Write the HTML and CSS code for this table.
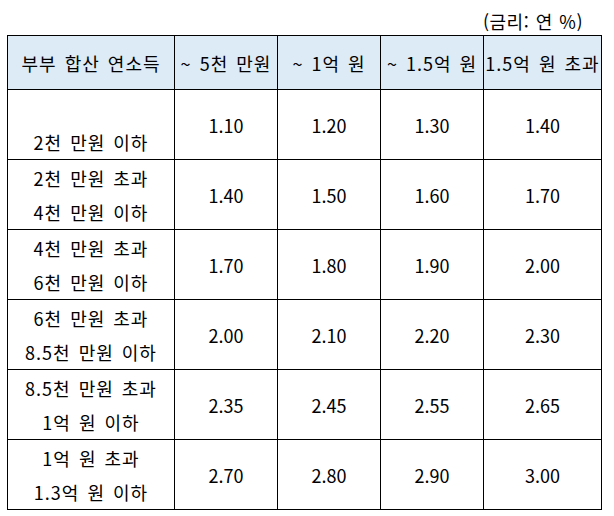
FILE: index.html
```html
<!DOCTYPE html>
<html lang="ko">
<head>
<meta charset="utf-8">
<link rel="stylesheet" href="styles.css">
</head>
<body>
<div class="page">
  <div class="unit">(금리: 연 %)</div>
  <table class="rates">
    <colgroup>
      <col class="c-income">
      <col class="c-mid">
      <col class="c-mid">
      <col class="c-mid">
      <col class="c-last">
    </colgroup>
    <thead>
      <tr>
        <th>부부 합산 연소득</th>
        <th>~ 5천 만원</th>
        <th>~ 1억 원</th>
        <th>~ 1.5억 원</th>
        <th>1.5억 원 초과</th>
      </tr>
    </thead>
    <tbody>
      <tr>
        <td class="income">&nbsp;<br>2천 만원 이하</td>
        <td>1.10</td><td>1.20</td><td>1.30</td><td>1.40</td>
      </tr>
      <tr>
        <td class="income">2천 만원 초과<br>4천 만원 이하</td>
        <td>1.40</td><td>1.50</td><td>1.60</td><td>1.70</td>
      </tr>
      <tr>
        <td class="income">4천 만원 초과<br>6천 만원 이하</td>
        <td>1.70</td><td>1.80</td><td>1.90</td><td>2.00</td>
      </tr>
      <tr>
        <td class="income">6천 만원 초과<br>8.5천 만원 이하</td>
        <td>2.00</td><td>2.10</td><td>2.20</td><td>2.30</td>
      </tr>
      <tr>
        <td class="income">8.5천 만원 초과<br>1억 원 이하</td>
        <td>2.35</td><td>2.45</td><td>2.55</td><td>2.65</td>
      </tr>
      <tr>
        <td class="income">1억 원 초과<br>1.3억 원 이하</td>
        <td>2.70</td><td>2.80</td><td>2.90</td><td>3.00</td>
      </tr>
    </tbody>
  </table>
</div>
</body>
</html>
```
FILE: styles.css
```css
html, body {
  margin: 0;
  padding: 0;
  background: #ffffff;
}
body {
  font-family: "Noto Sans CJK KR", "Noto Sans", sans-serif;
  font-size: 18px;
  color: #000000;
}
.page {
  padding-left: 7px;
}
.unit {
  width: 576px;
  height: 35px;
  line-height: 42px;
  text-align: right;
  letter-spacing: 0.5px;
  word-spacing: 1px;
}
.rates {
  border-collapse: collapse;
  table-layout: fixed;
  width: 595px;
}
.c-income { width: 167px; }
.c-mid { width: 103px; }
.c-last { width: 118px; }
.rates th,
.rates td {
  border: 1px solid #000000;
  padding: 0;
  text-align: center;
  vertical-align: middle;
  line-height: 34px;
  font-weight: normal;
  white-space: nowrap;
  overflow: hidden;
}
.rates th {
  background: #ddebf7;
  height: 53px;
  letter-spacing: 1px;
  word-spacing: 2px;
}
.rates td {
  height: 69px;
}
.rates td.income {
  letter-spacing: 1px;
  word-spacing: 2px;
}
```
